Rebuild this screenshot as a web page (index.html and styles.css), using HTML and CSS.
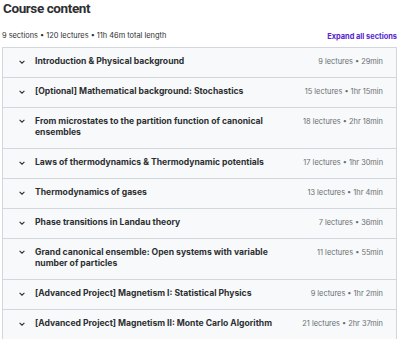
FILE: index.html
```html
<!DOCTYPE html>
<html lang="en">
<head>
    <meta charset="UTF-8">
    <meta name="viewport" content="width=device-width, initial-scale=1.0">
    <title>Course content</title>
    <link rel="stylesheet" href="styles.css">
</head>
<body>
    <h2 class="title">Course content</h2>

    <div class="summary">
        <span>9 sections • 120 lectures • 11h 46m total length</span>
        <button class="expand">Expand all sections</button>
    </div>

    <div class="sections">
        <div class="section">
            <span class="chevron"><svg viewBox="0 0 10 6" width="6" height="4"><path d="M1 1l4 4 4-4" fill="none" stroke="#2d2f31" stroke-width="1.8"/></svg></span>
            <span class="name">Introduction &amp; Physical background</span>
            <span class="meta">9 lectures • 29min</span>
        </div>
        <div class="section">
            <span class="chevron"><svg viewBox="0 0 10 6" width="6" height="4"><path d="M1 1l4 4 4-4" fill="none" stroke="#2d2f31" stroke-width="1.8"/></svg></span>
            <span class="name">[Optional] Mathematical background: Stochastics</span>
            <span class="meta">15 lectures • 1hr 15min</span>
        </div>
        <div class="section">
            <span class="chevron"><svg viewBox="0 0 10 6" width="6" height="4"><path d="M1 1l4 4 4-4" fill="none" stroke="#2d2f31" stroke-width="1.8"/></svg></span>
            <span class="name">From microstates to the partition function of canonical ensembles</span>
            <span class="meta">18 lectures • 2hr 18min</span>
        </div>
        <div class="section">
            <span class="chevron"><svg viewBox="0 0 10 6" width="6" height="4"><path d="M1 1l4 4 4-4" fill="none" stroke="#2d2f31" stroke-width="1.8"/></svg></span>
            <span class="name">Laws of thermodynamics &amp; Thermodynamic potentials</span>
            <span class="meta">17 lectures • 1hr 30min</span>
        </div>
        <div class="section">
            <span class="chevron"><svg viewBox="0 0 10 6" width="6" height="4"><path d="M1 1l4 4 4-4" fill="none" stroke="#2d2f31" stroke-width="1.8"/></svg></span>
            <span class="name">Thermodynamics of gases</span>
            <span class="meta">13 lectures • 1hr 4min</span>
        </div>
        <div class="section">
            <span class="chevron"><svg viewBox="0 0 10 6" width="6" height="4"><path d="M1 1l4 4 4-4" fill="none" stroke="#2d2f31" stroke-width="1.8"/></svg></span>
            <span class="name">Phase transitions in Landau theory</span>
            <span class="meta">7 lectures • 36min</span>
        </div>
        <div class="section">
            <span class="chevron"><svg viewBox="0 0 10 6" width="6" height="4"><path d="M1 1l4 4 4-4" fill="none" stroke="#2d2f31" stroke-width="1.8"/></svg></span>
            <span class="name">Grand canonical ensemble: Open systems with variable number of particles</span>
            <span class="meta">11 lectures • 55min</span>
        </div>
        <div class="section">
            <span class="chevron"><svg viewBox="0 0 10 6" width="6" height="4"><path d="M1 1l4 4 4-4" fill="none" stroke="#2d2f31" stroke-width="1.8"/></svg></span>
            <span class="name">[Advanced Project] Magnetism I: Statistical Physics</span>
            <span class="meta">9 lectures • 1hr 2min</span>
        </div>
        <div class="section">
            <span class="chevron"><svg viewBox="0 0 10 6" width="6" height="4"><path d="M1 1l4 4 4-4" fill="none" stroke="#2d2f31" stroke-width="1.8"/></svg></span>
            <span class="name">[Advanced Project] Magnetism II: Monte Carlo Algorithm</span>
            <span class="meta">21 lectures • 2hr 37min</span>
        </div>
    </div>
</body>
</html>
```

FILE: styles.css
```css
body {
    font-family: Inter, "Noto Sans", sans-serif;
    color: #2d2f31;
    margin: 0;
    padding: 0 3px 0 2px;
    background: #fff;
}
.title {
    font-family: Roboto, Inter, sans-serif;
    font-size: 13.5px;
    font-weight: 700;
    margin: 0;
    padding-left: 1px;
    line-height: 16px;
    letter-spacing: -0.4px;
}
.summary {
    display: flex;
    justify-content: space-between;
    align-items: center;
    margin-top: 14px;
    margin-bottom: 5px;
    font-size: 7.4px;
    line-height: 12px;
    color: #2d2f31;
}
.expand {
    background: none;
    border: none;
    padding: 0;
    font-family: inherit;
    font-size: 7.4px;
    font-weight: 700;
    color: #5624d0;
    cursor: pointer;
}
.sections {
    border: 1px solid #d1d7dc;
}
.section {
    display: flex;
    align-items: flex-start;
    background: #f7f9fa;
    border-top: 1px solid #d1d7dc;
    padding: 8px 13px 9px 16px;
    font-size: 8.6px;
    line-height: 11.8px;
}
.section:first-child {
    border-top: none;
}
.chevron {
    width: 16px;
    flex-shrink: 0;
    display: flex;
    align-items: center;
    height: 11.8px;
}
.name {
    flex: 1;
    font-weight: 700;
    padding-right: 20px;
}
.meta {
    color: #6a6f73;
    font-size: 7.4px;
    white-space: nowrap;
}
```
